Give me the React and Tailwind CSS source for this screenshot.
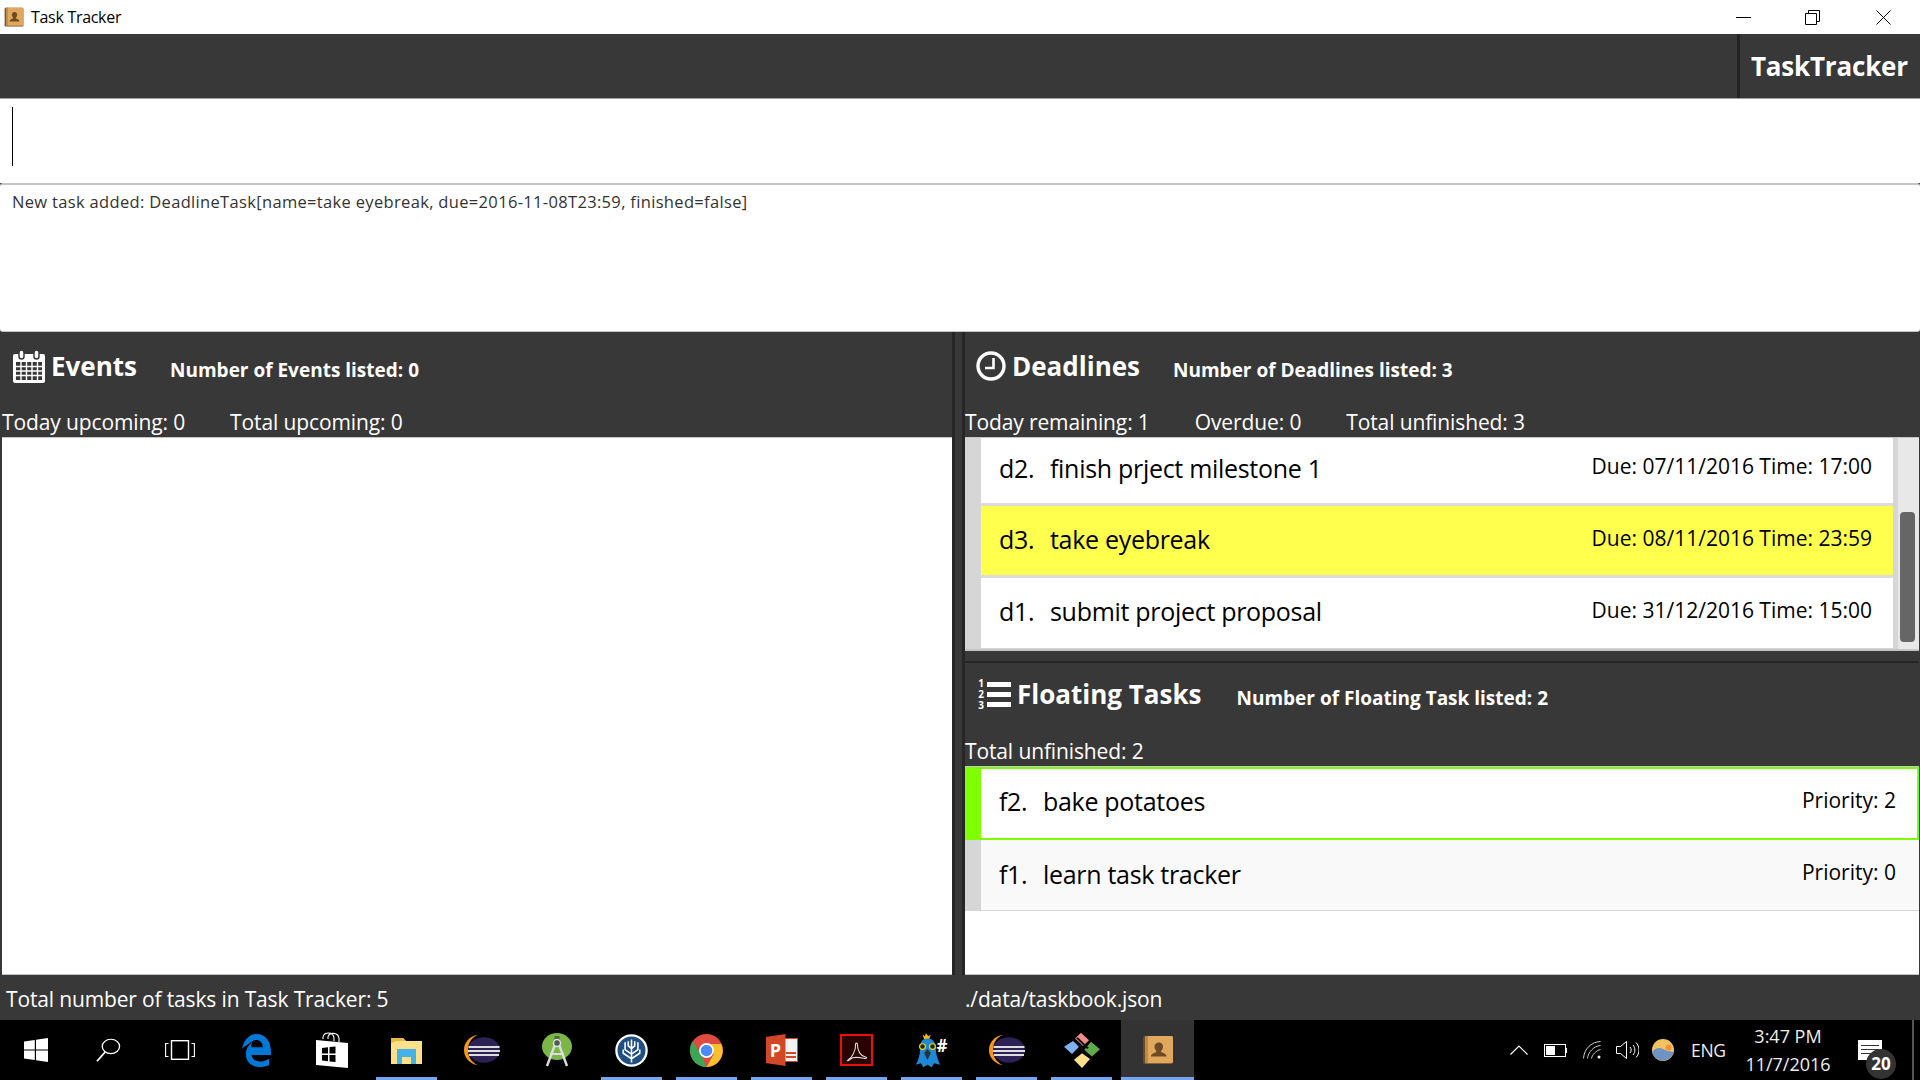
import { Fragment } from 'react'

const deadlines = [
  { id: 'd2.', name: 'finish prject milestone 1', due: 'Due: 07/11/2016 Time: 17:00', rowClass: 'h-[65px] bg-white pt-[18px]', dueClass: 'mt-[-5px]' },
  { id: 'd3.', name: 'take eyebreak', due: 'Due: 08/11/2016 Time: 23:59', rowClass: 'h-[69px] bg-[#ffff4d] pt-[21px]', dueClass: 'mt-[-4px]' },
  { id: 'd1.', name: 'submit project proposal', due: 'Due: 31/12/2016 Time: 15:00', rowClass: 'h-[70px] bg-white pt-[21px]', dueClass: 'mt-[-4px]' },
]

function CalendarIcon() {
  return (
    <svg width="32" height="34" viewBox="0 0 32 34" className="shrink-0">
      <path d="M2 5h28a2 2 0 0 1 2 2v25a2 2 0 0 1-2 2H2a2 2 0 0 1-2-2V7a2 2 0 0 1 2-2z" fill="#fff" />
      <rect x="6" y="1" width="5" height="9" rx="2.5" fill="#fff" stroke="#383838" strokeWidth="1.5" />
      <rect x="21" y="1" width="5" height="9" rx="2.5" fill="#fff" stroke="#383838" strokeWidth="1.5" />
      <path d="M3 13h26v18H3z" fill="#383838" />
      <path d="M3 17.5h26M3 22h26M3 26.5h26M8 13v18M13.5 13v18M19 13v18M24.5 13v18" stroke="#fff" strokeWidth="1.4" />
    </svg>
  )
}

function ClockIcon() {
  return (
    <svg width="30" height="30" viewBox="0 0 30 30" className="shrink-0">
      <circle cx="15" cy="15" r="13" fill="none" stroke="#fff" strokeWidth="3.4" />
      <path d="M17.5 7v10H9" fill="none" stroke="#fff" strokeWidth="2.6" />
    </svg>
  )
}

function NumberedListIcon() {
  return (
    <div className="flex w-[34px] shrink-0 items-center gap-[2px]">
      <div className="flex w-[8px] flex-col text-center text-[10px] leading-[11px] font-bold text-white">
        <span>1</span>
        <span>2</span>
        <span>3</span>
      </div>
      <div className="flex flex-1 flex-col gap-[5px]">
        <div className="h-[5px] bg-white" />
        <div className="h-[5px] bg-white" />
        <div className="h-[5px] bg-white" />
      </div>
    </div>
  )
}

function ContactsIcon({ width = 32, height = 30 }) {
  return (
    <svg width={width} height={height} viewBox="0 0 32 32" preserveAspectRatio="none">
      <rect x="1" y="1" width="30" height="30" rx="2" fill="#6b4a24" />
      <rect x="3" y="1" width="28" height="29" rx="1.5" fill="#dfa85c" />
      <rect x="3" y="1" width="3" height="29" fill="#b98a48" />
      <path d="M17 8c2.600 0 4 2 4 4.500 0 2-1 3.500-1.800 4.300v1.700c2.500.8 5.300 1.800 5.300 4.500H9c0-2.700 2.800-3.700 5.300-4.500v-1.700C13.500 16 12.500 14.500 12.500 12.500 12.500 10 14.400 8 17 8z" fill="#6d4a22" />
    </svg>
  )
}

function EclipseIcon() {
  return (
    <svg width="36" height="32" viewBox="0 0 36 40" preserveAspectRatio="none">
      <path d="M14 1C5 3 0 11 0 20s5 17 14 19C7 35 4 28 4 20S7 5 14 1z" fill="#f7941e" />
      <circle cx="20" cy="20" r="16" fill="#2c2255" />
      <path d="M4.500 15h31v2.400h-31zM4 20h32v2.400H4zM5 25h30v2.400H5z" fill="#ddd" />
    </svg>
  )
}

function TaskbarIcon({ name }) {
  if (name === 'windows') {
    return (
      <svg width="24" height="24" viewBox="0 0 24 24" fill="#fff">
        <path d="M0 3.400l10.800-1.500v9.500H0zM12 1.700L24 0v11.400H12zM0 12.600h10.800v9.500L0 20.600zM12 12.600h12V24l-12-1.700z" />
      </svg>
    )
  }
  if (name === 'search') {
    return (
      <svg width="25" height="24" viewBox="0 0 26 30" preserveAspectRatio="none" fill="none" stroke="#fff" strokeWidth="1.400">
        <circle cx="15.500" cy="10.500" r="9" />
        <path d="M9.500 17.500L1 29" strokeWidth="1.800" />
      </svg>
    )
  }
  if (name === 'taskview') {
    return (
      <svg width="30" height="20" viewBox="0 0 30 20" fill="none" stroke="#fff" strokeWidth="1.100">
        <rect x="6.500" y="0.700" width="17" height="18.600" strokeWidth="1.400" />
        <path d="M3.500 3.500H.6v13h2.900M26.500 3.500h2.900v13h-2.900" />
      </svg>
    )
  }
  if (name === 'edge') {
    return (
      <svg width="29" height="33" viewBox="0 0 30 30" preserveAspectRatio="none">
        <path d="M0 13.500C2 4.500 8.500 0 15 0c9 0 15 6.500 15 16.500v2.500H10c.5 5.500 8 8.500 18 3.500v6c-12 4-24 .5-24-10.500 0-4 2-7.500 6.500-10.500-.7 1.500-1 3-1 4.500h12c0-6-7-8.500-12-4.500C6 9.500 3 10.500 0 13.500z" fill="#0078d7" />
      </svg>
    )
  }
  if (name === 'store') {
    return (
      <svg width="32" height="36" viewBox="0 0 32 36">
        <path d="M7 7V5c1-5 10-6 11 1v3M12 7V5c1-5 10-5 11 1v4" fill="none" stroke="#fff" strokeWidth="1.100" />
        <path d="M0 8l32 3v25L0 33z" fill="#fff" />
        <path d="M6 16l6-.7v6.200H6zM13.500 15.100l6-.7v7.100h-6zM6 23h6v6.300l-6-.8zM13.500 23h6v7.100l-6-.7z" fill="#000" />
      </svg>
    )
  }
  if (name === 'folder') {
    return (
      <svg width="31" height="27" viewBox="0 0 31 27">
        <path d="M0 1h12l3 3h16v23H0z" fill="#ffe08a" />
        <path d="M0 1h12l3 3H5L0 6z" fill="#e8b93e" />
        <path d="M6 12h19v15h-5v-7h-9v7H6z" fill="#45b1ea" />
      </svg>
    )
  }
  if (name === 'eclipse') return <EclipseIcon />
  if (name === 'android') {
    return (
      <svg width="30" height="34" viewBox="0 0 30 34">
        <ellipse cx="15" cy="13.500" rx="15" ry="13.500" fill="#7ab648" />
        <rect x="12.500" y="3" width="5" height="5" fill="#4a6a38" />
        <path d="M14 9L5 33M16 9l9 24" stroke="#ddd" strokeWidth="2.400" fill="none" />
        <path d="M8 21h14" stroke="#ddd" strokeWidth="2" />
        <circle cx="15" cy="10" r="3.500" fill="#555" stroke="#ddd" strokeWidth="1.500" />
      </svg>
    )
  }
  if (name === 'sourcetree') {
    return (
      <svg width="33" height="33" viewBox="0 0 36 36">
        <circle cx="18" cy="18" r="16.500" fill="#205081" stroke="#fff" strokeWidth="2.500" />
        <path d="M18 31V6M18 22l-7-5V9M18 22l7-5V9M18 27l-9-6v-4M18 27l9-6v-4M18 16l-3.500-3V8M18 16l3.500-3V8" stroke="#fff" strokeWidth="1.700" fill="none" />
      </svg>
    )
  }
  if (name === 'chrome') {
    return (
      <svg width="33" height="33" viewBox="0 0 40 40">
        <circle cx="20" cy="20" r="20" fill="#e04a3f" />
        <path d="M3 9L13 24 20 40a20 20 0 0 1-20-20c0-4 1-8 3-11z" fill="#3aa757" />
        <path d="M20 12h18a20 20 0 0 1-18 28l9-16z" fill="#fbc02d" />
        <circle cx="20" cy="20" r="9" fill="#fff" />
        <circle cx="20" cy="20" r="7" fill="#4c8bf5" />
      </svg>
    )
  }
  if (name === 'powerpoint') {
    return (
      <div className="relative h-[32px] w-[32px]">
        <div className="absolute top-[4px] right-0 h-[24px] w-[20px] border border-[#d24726] bg-[#f2f2f2]">
          <div className="mt-[13px] ml-[7px] h-[2px] w-[10px] bg-[#d24726]" />
          <div className="mt-[2px] ml-[7px] h-[2px] w-[10px] bg-[#d24726]" />
        </div>
        <div className="absolute top-0 left-0 flex h-[32px] w-[20px] items-center justify-center bg-[#d24726] text-[18px] leading-none font-bold text-white [clip-path:polygon(0_3px,100%_0,100%_100%,0_29px)]">
          P
        </div>
      </div>
    )
  }
  if (name === 'acrobat') {
    return (
      <svg width="33" height="32" viewBox="0 0 33 32">
        <rect x="1" y="1" width="31" height="30" fill="#2a0000" stroke="#e8100c" strokeWidth="2" />
        <path d="M8 26c4-2 8-10 7.500-15-.2-2.500 2-2.500 2 0 0 6 3 11 8 12 2 .4 1 1.800-1 1.400-6-1-11-2-14 .8-1.800 1.800-3.800 1.700-2.500.8z" fill="none" stroke="#ddd" strokeWidth="1.100" />
      </svg>
    )
  }
  if (name === 'bird') {
    return (
      <div className="relative h-[35px] w-[34px]">
        <svg width="25" height="35" viewBox="0 0 30 44" preserveAspectRatio="none" className="absolute top-0 left-0">
          <path d="M13 0l3 4 3-2-2 6h-6L9 2l3 2z" fill="#f5b800" />
          <path d="M15 7c7 0 10 6 10 13 0 8 3 14 5 20l-7-2-3 5-5-3-5 3-3-5-6 2c3-6 5-12 5-20C6 13 8 7 15 7z" fill="#1e88d6" />
          <circle cx="9" cy="17" r="3.500" fill="#222" stroke="#e8d800" strokeWidth="1.500" />
          <circle cx="21" cy="17" r="3.500" fill="#222" stroke="#e8d800" strokeWidth="1.500" />
          <path d="M15 20l4 5-4 9-4-9z" fill="#26323a" />
        </svg>
        <span className="absolute top-[4px] left-[22px] text-[17px] leading-none font-bold text-white">#</span>
      </div>
    )
  }
  if (name === 'diamond') {
    return (
      <svg width="36" height="36" viewBox="0 0 36 44" preserveAspectRatio="none">
        <path d="M17 1l8 9-6 7-8-9z" fill="#f28b8b" />
        <path d="M9 11l6 7-7 9-8-9z" fill="#7fb2f0" />
        <path d="M27 12l9 9-8 9-8-8z" fill="#5faa4a" />
        <path d="M18 26l8 7-8 11-8-10z" fill="#ffe08a" />
        <path d="M13 7l11 13M24 28L14 15" stroke="#111" strokeWidth="2.200" />
      </svg>
    )
  }
  return <ContactsIcon />
}

const taskbarApps = [
  { name: 'edge' },
  { name: 'store' },
  { name: 'folder', open: true },
  { name: 'eclipse' },
  { name: 'android' },
  { name: 'sourcetree', open: true },
  { name: 'chrome', open: true },
  { name: 'powerpoint', open: true },
  { name: 'acrobat', open: true },
  { name: 'bird', open: true },
  { name: 'eclipse', open: true },
  { name: 'diamond', open: true },
]

function TitleRow({ icon, title, count, heightClass, pl = 'pl-[13px]', countGap = 'ml-[33px]' }) {
  return (
    <div className={`flex items-center ${pl} ${heightClass} font-bold text-white`}>
      {icon}
      <span className="ml-[6px] text-[26px] leading-none">{title}</span>
      <span className={`mt-[9px] text-[19px] leading-none ${countGap}`}>{count}</span>
    </div>
  )
}

function Stats({ items, pl = '' }) {
  return (
    <div className={`flex h-[31px] items-center gap-[45px] pt-[2px] text-[21px] leading-none tracking-[-0.12px] text-white ${pl}`}>
      {items.map((s) => (
        <span key={s}>{s}</span>
      ))}
    </div>
  )
}

function TaskName({ id, name, gapClass }) {
  return (
    <span className="text-[25px] leading-none tracking-[-0.3px] text-black">
      <span className={`inline-block ${gapClass}`}>{id}</span>
      {name}
    </span>
  )
}

export default function App() {
  return (
    <div className="flex h-screen w-full flex-col overflow-hidden bg-[#383838] font-['Open_Sans','Noto_Sans',sans-serif]">
      {/* window title bar */}
      <div className="flex h-[34px] shrink-0 items-center bg-white pl-[4px]">
        <ContactsIcon width={20} height={20} />
        <span className="ml-[7px] text-[16px] tracking-[-0.3px] text-black">Task Tracker</span>
        <div className="ml-auto flex items-center pr-[29px]">
          <div className="h-[1px] w-[15px] bg-black" />
          <svg width="15" height="15" viewBox="0 0 15 15" fill="none" stroke="#000" className="ml-[54px]">
            <path d="M.5 3.500h11v11H.5zM3.500 3.500v-3h11v11h-3" />
          </svg>
          <svg width="15" height="15" viewBox="0 0 15 15" fill="none" stroke="#000" className="ml-[56px]">
            <path d="M.5.500l14 14M14.500.500l-14 14" />
          </svg>
        </div>
      </div>

      {/* brand header */}
      <div className="flex h-[65px] shrink-0 justify-end border-b border-[#a0a0a0] bg-[#383838]">
        <div className="flex w-[183px] items-center border-l-[3px] border-[#232323] pl-[11px] text-[26px] font-bold tracking-[-0.2px] text-white">
          TaskTracker
        </div>
      </div>

      {/* command box */}
      <div className="h-[84px] shrink-0 bg-white pt-[8px] pl-[12px]">
        <div className="h-[59px] w-[1px] bg-black" />
      </div>

      {/* result display */}
      <div className="h-[149px] shrink-0 rounded-[3px] border-t-2 border-b border-[#c4c4c4] bg-white pt-[5px] pl-[12px] text-[16.5px] leading-[24px] tracking-[0.33px] text-[#333]">
        New task added: DeadlineTask[name=take eyebreak, due=2016-11-08T23:59, finished=false]
      </div>

      {/* panels */}
      <div className="flex h-[643px] shrink-0">
        <div className="flex w-[952px] shrink-0 flex-col">
          <TitleRow icon={<CalendarIcon />} title="Events" count="Number of Events listed: 0" heightClass="h-[74px] pb-[6px]" />
          <Stats items={['Today upcoming: 0', 'Total upcoming: 0']} pl="pl-[2px]" />
          <div className="ml-[2px] flex-1 border-y border-[#c4c4c4] bg-white" />
        </div>

        <div className="w-[13px] shrink-0 border-x-[3px] border-[#262626]" />

        <div className="flex min-w-0 flex-1 flex-col pr-[1px]">
          <TitleRow icon={<ClockIcon />} title="Deadlines" count="Number of Deadlines listed: 3" heightClass="h-[74px] pb-[6px]" pl="pl-[11px]" />
          <Stats items={['Today remaining: 1', 'Overdue: 0', 'Total unfinished: 3']} />
          <div className="flex h-[214px] shrink-0 border-t border-b-[2px] border-[#c4c4c4] bg-[#d6d6d6]">
            <div className="flex min-w-0 flex-1 flex-col pl-[16px]">
              {deadlines.map((d, i) => (
                <Fragment key={d.id}>
                  {i > 0 && <div className="h-[3px] shrink-0 bg-[#dcdcdc]" />}
                  <div className={`flex shrink-0 items-start justify-between pr-[21px] pl-[18px] ${d.rowClass}`}>
                    <TaskName id={d.id} name={d.name} gapClass="w-[51px]" />
                    <span className={`text-[21px] leading-[30px] text-black ${d.dueClass}`}>{d.due}</span>
                  </div>
                </Fragment>
              ))}
            </div>
            <div className="w-[26px] shrink-0 border-l-[5px] border-[#d6d6d6] bg-[#e8e8e8] pt-[74px] pl-[2px]">
              <div className="h-[130px] w-[15px] rounded-[4px] bg-[#666]" />
            </div>
          </div>

          <div className="mt-[10px] h-[2px] shrink-0 bg-[#262626]" />

          <TitleRow icon={<NumberedListIcon />} title="Floating Tasks" count="Number of Floating Task listed: 2" heightClass="h-[72px] pb-[10px]" pl="pl-[12px]" countGap="ml-[35px]" />
          <Stats items={['Total unfinished: 2']} />
          <div className="flex flex-1 flex-col border-y border-[#c4c4c4] bg-white">
            <div className="flex h-[73px] border-2 border-[#7fff00]">
              <div className="w-[14px] shrink-0 bg-[#7fff00]" />
              <div className="flex flex-1 items-start justify-between bg-white pt-[20px] pr-[21px] pl-[18px]">
                <TaskName id="f2." name="bake potatoes" gapClass="w-[44px]" />
                <span className="mt-[-4px] text-[21px] leading-[30px] text-black">Priority: 2</span>
              </div>
            </div>
            <div className="flex h-[71px] border-b border-[#d6d6d6]">
              <div className="w-[16px] shrink-0 bg-[#d6d6d6]" />
              <div className="flex flex-1 items-start justify-between bg-[#f9f9f9] pt-[22px] pr-[23px] pl-[18px]">
                <TaskName id="f1." name="learn task tracker" gapClass="w-[44px]" />
                <span className="mt-[-5px] text-[21px] leading-[30px] text-black">Priority: 0</span>
              </div>
            </div>
          </div>
        </div>
      </div>

      {/* status bar */}
      <div className="flex h-[45px] shrink-0 items-center pt-[5px] text-[21px] tracking-[-0.15px] text-white">
        <span className="w-[965px] shrink-0 pl-[6px]">Total number of tasks in Task Tracker: 5</span>
        <span>./data/taskbook.json</span>
      </div>

      {/* windows taskbar */}
      <div className="flex h-[60px] shrink-0 items-center bg-black text-white">
        {['windows', 'search', 'taskview'].map((name) => (
          <div key={name} className="flex h-full w-[72px] items-center justify-center">
            <TaskbarIcon name={name} />
          </div>
        ))}
        <div className="ml-[3px] flex h-full">
          {taskbarApps.map((app, i) => (
            <div key={i} className="relative flex h-full w-[75px] items-center justify-center">
              <TaskbarIcon name={app.name} />
              {app.open && <div className="absolute inset-x-[7px] bottom-0 h-[3px] bg-[#76a5f0]" />}
            </div>
          ))}
          <div className="relative ml-[2px] flex h-full w-[73px] items-center justify-center bg-[#333]">
            <TaskbarIcon name="contacts" />
            <div className="absolute inset-x-0 bottom-0 h-[3px] bg-[#76a5f0]" />
          </div>
        </div>

        <div className="ml-auto flex h-full items-center">
          <svg width="18" height="10" viewBox="0 0 18 10" fill="none" stroke="#fff" strokeWidth="1.200" className="mr-[16px]">
            <path d="M.5 9.500L9 1l8.500 8.500" />
          </svg>
          <svg width="23" height="13" viewBox="0 0 23 13" className="mr-[16px]">
            <rect x=".5" y=".5" width="21" height="12" fill="none" stroke="#fff" />
            <rect x="2" y="2" width="9" height="9" fill="#fff" />
            <rect x="22" y="4" width="1" height="5" fill="#fff" />
          </svg>
          <svg width="18" height="18" viewBox="0 0 18 18" fill="none" stroke="#ccc" strokeWidth="1" className="mr-[15px]">
            <path d="M.5 17.500C1 8 8 1 17.500.500M4.500 17.500C5 11 11 5 17.500 4.500M8.500 17.500C9 14 13 9.500 17.500 8.500" />
            <circle cx="16" cy="16" r="1.500" fill="#fff" stroke="none" />
          </svg>
          <svg width="23" height="18" viewBox="0 0 23 18" fill="none" stroke="#fff" strokeWidth="1" className="mr-[13px]">
            <path d="M.5 5.500h4l6-5v17l-6-5h-4zM14 6c1.500 1.500 1.500 4.500 0 6M17 4c2.500 3 2.500 7 0 10M20 1.500c4 4 4 11 0 15" />
          </svg>
          <svg width="22" height="22" viewBox="0 0 22 22" className="mr-[17px]">
            <circle cx="11" cy="11" r="11" fill="#f2c35e" />
            <path d="M0 13c3-4 8-5 11-3s7 2 10.500 3A11 11 0 0 1 0 13z" fill="#6e93c4" />
            <circle cx="16.500" cy="8.500" r="3" fill="#e9963c" />
          </svg>
          <span className="mr-[20px] w-[35px] text-[17.500px] tracking-[-0.3px] text-[#eee]">ENG</span>
          <div className="mr-[28px] flex w-[84px] flex-col items-center text-[18px] leading-[28px] text-[#eee]">
            <span>3:47 PM</span>
            <span>11/7/2016</span>
          </div>
          <div className="relative mr-[30px] h-[20px] w-[24px] bg-white">
            <div className="mx-[3px] mt-[5px] h-[1px] bg-[#333]" />
            <div className="mx-[3px] mt-[3px] h-[1px] bg-[#333]" />
            <div className="mx-[3px] mt-[3px] h-[1px] bg-[#333]" />
            <div className="absolute top-[9px] left-[8px] flex h-[30px] w-[30px] items-center justify-center rounded-full bg-[#333] text-[17px] font-bold text-white">
              20
            </div>
          </div>
          <div className="h-full w-[2px] bg-[#555]" />
          <div className="w-[6px]" />
        </div>
      </div>
    </div>
  )
}
